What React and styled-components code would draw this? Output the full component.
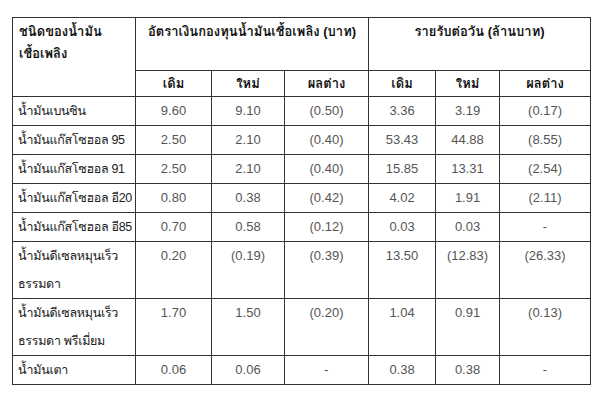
import React from "react";
import styled, { createGlobalStyle } from "styled-components";

const GlobalStyle = createGlobalStyle`
  html, body {
    margin: 0;
    padding: 0;
    background: #ffffff;
  }
  body {
    font-family: "Liberation Sans", Tahoma, Garuda, Loma, "Noto Sans", sans-serif;
  }
`;

const Page = styled.div`
  padding: 17px 0 0 12px;
`;

const Table = styled.table`
  border-collapse: collapse;
  table-layout: fixed;
  width: 578px;
  border: 1px solid #333;
`;

const HeadCell = styled.th`
  border: 1px solid #333;
  padding: ${({ $left }) => ($left ? "3px 6px 0" : "3px 4px 0")};
  font-size: 13px;
  font-weight: bold;
  color: #111;
  text-align: ${({ $left }) => ($left ? "left" : "center")};
  vertical-align: top;
  line-height: 22px;
  white-space: nowrap;
  height: ${({ $h }) => $h || 25}px;
  box-sizing: border-box;
`;

const SubHead = styled(HeadCell)`
  vertical-align: middle;
  padding: 0 4px;
`;

const NameCell = styled.td`
  border: 1px solid #333;
  padding: 0 2px 0 5px;
  font-size: 12.5px;
  letter-spacing: -0.3px;
  color: #222;
  line-height: 28px;
  vertical-align: top;
  white-space: nowrap;
`;

const NumCell = styled.td`
  border: 1px solid #333;
  padding: 0 4px;
  font-size: 13px;
  color: #555;
  text-align: center;
  line-height: 28px;
  vertical-align: top;
`;

const widths = [123, 76, 73, 84, 67, 64, 91];

const rows = [
  { name: ["น้ำมันเบนซิน"], v: ["9.60", "9.10", "(0.50)", "3.36", "3.19", "(0.17)"] },
  { name: ["น้ำมันแก๊สโซฮอล 95"], v: ["2.50", "2.10", "(0.40)", "53.43", "44.88", "(8.55)"] },
  { name: ["น้ำมันแก๊สโซฮอล 91"], v: ["2.50", "2.10", "(0.40)", "15.85", "13.31", "(2.54)"] },
  { name: ["น้ำมันแก๊สโซฮอล อี20"], v: ["0.80", "0.38", "(0.42)", "4.02", "1.91", "(2.11)"] },
  { name: ["น้ำมันแก๊สโซฮอล อี85"], v: ["0.70", "0.58", "(0.12)", "0.03", "0.03", "-"] },
  { name: ["น้ำมันดีเซลหมุนเร็ว", "ธรรมดา"], v: ["0.20", "(0.19)", "(0.39)", "13.50", "(12.83)", "(26.33)"] },
  { name: ["น้ำมันดีเซลหมุนเร็ว", "ธรรมดา พรีเมี่ยม"], v: ["1.70", "1.50", "(0.20)", "1.04", "0.91", "(0.13)"] },
  { name: ["น้ำมันเตา"], v: ["0.06", "0.06", "-", "0.38", "0.38", "-"] },
];

const subLabels = ["เดิม", "ใหม่", "ผลต่าง"];

export default function App() {
  return (
    <>
      <GlobalStyle />
      <Page>
        <Table>
          <colgroup>
            {widths.map((w, i) => (
              <col key={i} style={{ width: w }} />
            ))}
          </colgroup>
          <thead>
            <tr>
              <HeadCell $left rowSpan={2}>
                ชนิดของน้ำมัน
                <br />
                เชื้อเพลิง
              </HeadCell>
              <HeadCell colSpan={3} $h={53}>
                อัตราเงินกองทุนน้ำมันเชื้อเพลิง (บาท)
              </HeadCell>
              <HeadCell colSpan={3} $h={53}>
                รายรับต่อวัน (ล้านบาท)
              </HeadCell>
            </tr>
            <tr>
              {[...subLabels, ...subLabels].map((s, i) => (
                <SubHead key={i} $h={26}>
                  {s}
                </SubHead>
              ))}
            </tr>
          </thead>
          <tbody>
            {rows.map((r, i) => (
              <tr key={i}>
                <NameCell>
                  {r.name.map((n, j) => (
                    <div key={j}>{n}</div>
                  ))}
                </NameCell>
                {r.v.map((v, j) => (
                  <NumCell key={j}>{v}</NumCell>
                ))}
              </tr>
            ))}
          </tbody>
        </Table>
      </Page>
    </>
  );
}
